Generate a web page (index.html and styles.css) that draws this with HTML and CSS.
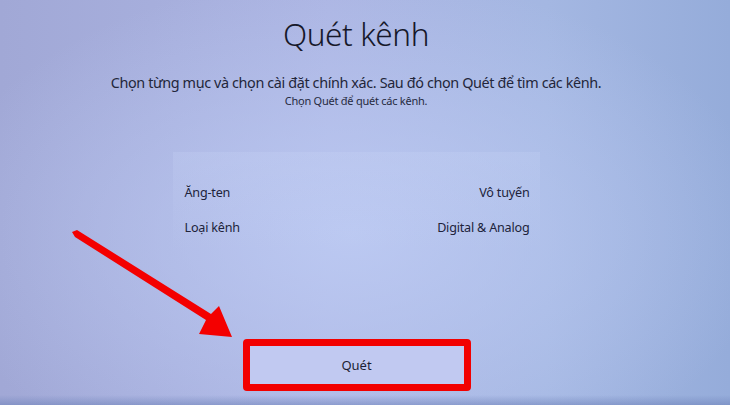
FILE: index.html
```html
<!DOCTYPE html>
<html lang="vi">
<head>
<meta charset="utf-8">
<title>Quét kênh</title>
<link rel="stylesheet" href="styles.css">
</head>
<body>
<div class="screen">
  <h1 class="title">Quét kênh</h1>
  <p class="desc">Chọn từng mục và chọn cài đặt chính xác. Sau đó chọn Quét để tìm các kênh.</p>
  <p class="hint">Chọn Quét để quét các kênh.</p>
  <div class="panel">
    <div class="row"><span>Ăng-ten</span><span>Vô tuyến</span></div>
    <div class="row"><span>Loại kênh</span><span>Digital &amp; Analog</span></div>
  </div>
  <div class="highlight">
    <button class="scan">Quét</button>
  </div>
  <div class="bottom-band"></div>
  <svg class="arrow" width="730" height="405" viewBox="0 0 730 405">
    <polygon points="72,232 75,237 206,320 199,334 232,337 219,306 211,314 77,230" fill="#f40000"/>
  </svg>
</div>
</body>
</html>
```

FILE: styles.css
```css
html, body {
  margin: 0;
  padding: 0;
}
body {
  width: 730px;
  height: 405px;
  overflow: hidden;
  font-family: "Noto Sans", "Open Sans", sans-serif;
  color: #1c1f33;
}
.screen {
  position: relative;
  width: 730px;
  height: 405px;
  box-sizing: border-box;
  padding-right: 18px;
  display: flex;
  flex-direction: column;
  align-items: center;
  background:
    radial-gradient(ellipse 420px 260px at 48% 58%, rgba(190, 204, 244, 0.85) 0%, rgba(190, 204, 244, 0) 100%),
    linear-gradient(90deg, #a1a8d6 0%, #acb5e3 45%, #a4b7e2 75%, #95acda 100%);
}
.title {
  margin: 14px 0 0;
  font-size: 31.5px;
  font-weight: 300;
  line-height: 40px;
  letter-spacing: -0.4px;
  color: #16182a;
}
.desc {
  margin: 20px 0 0;
  font-size: 14.4px;
  line-height: 18px;
  letter-spacing: -0.38px;
  color: #23263a;
}
.hint {
  margin: 2px 0 0;
  font-size: 11px;
  line-height: 14px;
  letter-spacing: -0.25px;
  color: #262a40;
}
.panel {
  margin-top: 44px;
  width: 367px;
  padding: 32px 10px 0 12px;
  height: 98px;
  box-sizing: border-box;
  background: linear-gradient(180deg, rgba(204, 216, 248, 0.22) 0%, rgba(190, 204, 244, 0.0) 100%);
  display: flex;
  flex-direction: column;
  gap: 17px;
}
.row {
  display: flex;
  justify-content: space-between;
  font-size: 12.6px;
  line-height: 18px;
  letter-spacing: -0.2px;
  color: #20233a;
}
.highlight {
  margin-top: 89px;
  margin-left: 1px;
  border: 7px solid #f20000;
  border-radius: 4px;
  width: 214px;
  height: 38px;
  display: flex;
}
.scan {
  flex: 1;
  border: none;
  margin: 0;
  padding: 0;
  background: #c1c9f1;
  font-family: "Noto Sans", "Open Sans", sans-serif;
  font-size: 13px;
  color: #1c1f33;
}
.bottom-band {
  position: absolute;
  left: 0;
  right: 0;
  bottom: 0;
  height: 10px;
  background: linear-gradient(180deg, rgba(120, 140, 190, 0) 0%, rgba(110, 130, 185, 0.55) 100%);
}
.arrow {
  position: absolute;
  left: 0;
  top: 0;
  pointer-events: none;
}
```
